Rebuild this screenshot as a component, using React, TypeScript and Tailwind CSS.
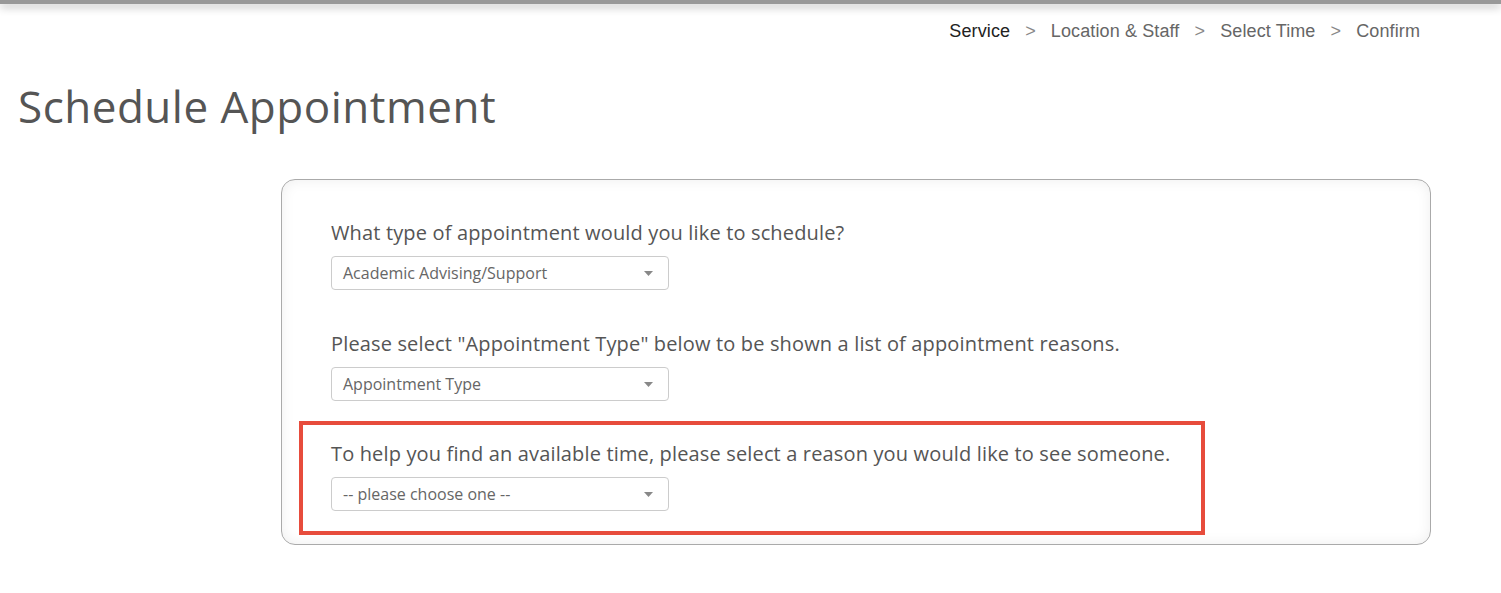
const steps = ["Service", "Location & Staff", "Select Time", "Confirm"];

const Select = ({ value }: { value: string }) => {
  return (
    <div
      role="combobox"
      className="mt-[9px] flex h-[34px] w-[338px] items-center justify-between rounded-[4px] border border-[#ccc] bg-white pl-[11px] pr-[15px] text-[16px] text-[#666]"
    >
      <span>{value}</span>
      <svg width="9" height="5" viewBox="0 0 9 5">
        <path d="M0 0h9L4.5 5z" fill="#888" />
      </svg>
    </div>
  );
};

const App = () => {
  return (
    <div className="min-h-screen bg-white font-['Open_Sans',sans-serif]">
      {/* top bar */}
      <div className="h-[4px] bg-[#999] shadow-[0_3px_8px_rgba(0,0,0,0.3)]" />

      <nav className="mt-[15px] flex justify-end gap-[15px] pr-[81px] font-['Liberation_Sans',Arial,sans-serif] text-[18px] leading-[24px] tracking-[0.12px] text-[#666]">
        {steps.map((step, i) => (
          <div key={step} className="flex gap-[15px]">
            {i > 0 && <span className="text-[#888]">&gt;</span>}
            <span className={i === 0 ? "text-[#222]" : ""}>{step}</span>
          </div>
        ))}
      </nav>

      <h1 className="ml-[18px] mt-[35px] text-[44px] font-normal leading-[56px] tracking-[0.5px] text-[#555]">
        Schedule Appointment
      </h1>

      <div className="ml-[281px] mt-[45px] h-[366px] w-[1150px] rounded-[14px] border border-[#aaa] pl-[49px] pt-[39px] shadow-[inset_0_0_14px_rgba(0,0,0,0.07)]">
        <div>
          <p className="text-[20px] leading-[28px] tracking-[0.15px] text-[#555]">
            What type of appointment would you like to schedule?
          </p>
          <Select value="Academic Advising/Support" />
        </div>

        <div className="mt-[40px]">
          <p className="text-[20px] leading-[28px] tracking-[0.15px] text-[#555]">
            Please select "Appointment Type" below to be shown a list of appointment reasons.
          </p>
          <Select value="Appointment Type" />
        </div>

        <div className="-ml-[32px] mt-[20px] w-[906px] border-4 border-[#e74c3c] pb-[20px] pl-[28px] pt-[15px]">
          <p className="text-[20px] leading-[28px] tracking-[0.15px] text-[#555]">
            To help you find an available time, please select a reason you would like to see someone.
          </p>
          <Select value="-- please choose one --" />
        </div>
      </div>
    </div>
  );
};

export default App;
